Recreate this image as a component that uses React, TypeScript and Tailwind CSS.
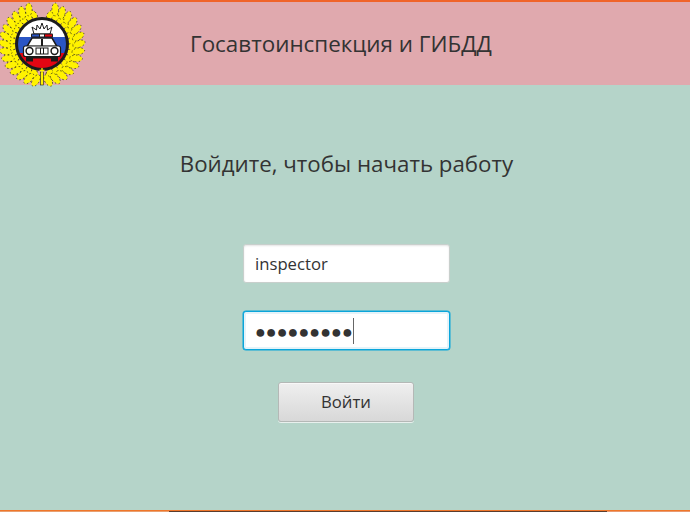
type Leaf = { x: number; y: number; r: number; rx: number; ry: number };

function buildLeaves(): Leaf[] {
  const out: Leaf[] = [];
  const rows = [
    { rad: 31, rx: 3.2, ry: 5.6, tilt: 30 },
    { rad: 37, rx: 3.4, ry: 6.4, tilt: -22 },
  ];
  rows.forEach((row, ri) => {
    for (let a = 17 + ri * 4; a <= 172; a += 11.5) {
      const t = (a * Math.PI) / 180;
      out.push({ x: -Math.sin(t) * row.rad, y: -Math.cos(t) * row.rad, r: a + row.tilt, rx: row.rx, ry: row.ry });
    }
  });
  return out;
}

const leaves = buildLeaves();

function Emblem() {
  return (
    <svg width="88" height="85" viewBox="0 0 88 85" className="absolute top-0 left-0">
      <g transform="translate(42 42)">
        {leaves.map((l, i) => (
          <g key={i}>
            <ellipse cx={l.x} cy={l.y} rx={l.rx} ry={l.ry} transform={`rotate(${-l.r} ${l.x} ${l.y})`} fill="#fff200" stroke="#1a1a1a" strokeWidth="0.7" strokeDasharray="1.4 2.4" />
            <ellipse cx={-l.x} cy={l.y} rx={l.rx} ry={l.ry} transform={`rotate(${l.r} ${-l.x} ${l.y})`} fill="#fff200" stroke="#1a1a1a" strokeWidth="0.7" strokeDasharray="1.4 2.4" />
          </g>
        ))}
      </g>
      <rect x="40.500" y="70" width="3" height="13" fill="#fff200" stroke="#1a1a1a" strokeWidth="0.6" />
      <circle cx="42" cy="42" r="27" fill="#1c1c1c" />
      <clipPath id="disc"><circle cx="42" cy="42" r="24" /></clipPath>
      <g clipPath="url(#disc)">
        <rect x="15" y="15" width="54" height="20" fill="#ffffff" />
        <rect x="15" y="35" width="54" height="16" fill="#2a55c4" />
        <rect x="15" y="51" width="54" height="17" fill="#e30613" />
      </g>
      <polygon points="42,21 44,27 47,23 47.500,28 52,25 50,32 34,32 32,25 36.500,28 37,23 40,27" fill="#fff" stroke="#1a1a1a" strokeWidth="1" />
      <rect x="31" y="31.500" width="22" height="4" rx="1" fill="#1a1a1a" />
      <rect x="32" y="32.500" width="7" height="2" fill="#2a55c4" />
      <rect x="40" y="32.500" width="4" height="2" fill="#fff" />
      <rect x="45" y="32.500" width="7" height="2" fill="#e30613" />
      <path d="M32 36H52L57 44.500H27Z" fill="#fff" stroke="#1a1a1a" strokeWidth="1.500" />
      <rect x="41" y="37" width="2" height="7" fill="#1a1a1a" />
      <rect x="23.500" y="44" width="37" height="10.500" rx="2" fill="#fff" stroke="#1a1a1a" strokeWidth="1.200" />
      <circle cx="29.500" cy="49" r="3.400" fill="#fff" stroke="#1a1a1a" strokeWidth="1.500" />
      <circle cx="54.500" cy="49" r="3.400" fill="#fff" stroke="#1a1a1a" strokeWidth="1.500" />
      <rect x="36" y="46" width="12" height="6" fill="#fff" stroke="#1a1a1a" strokeWidth="1" />
      <rect x="40" y="46" width="1" height="6" fill="#1a1a1a" />
      <rect x="43" y="46" width="1" height="6" fill="#1a1a1a" />
      <rect x="26" y="54.500" width="7" height="5" fill="#1a1a1a" />
      <rect x="51" y="54.500" width="7" height="5" fill="#1a1a1a" />
      <rect x="33" y="54.500" width="18" height="2" fill="#1a1a1a" />
      <path d="M42 66v5M39.500 68.500h5" stroke="#fff200" strokeWidth="1.300" />
    </svg>
  );
}

export default function App() {
  return (
    <div className="flex h-[512px] w-[690px] flex-col overflow-hidden bg-[#b5d4c9] font-['Open_Sans',sans-serif] text-[#333333]">
      <div className="h-[2px] bg-[#f0642a]" />
      <header className="relative flex h-[83px] items-center bg-[#e0a9ae] pl-[190px]">
        <Emblem />
        <h1 className="relative top-[1px] text-[22.4px] leading-none font-normal">Госавтоинспекция и ГИБДД</h1>
      </header>
      <main className="flex flex-1 flex-col items-center pl-[3px]">
        <h2 className="mt-[64px] text-[22.3px] leading-[30px] font-normal">Войдите, чтобы начать работу</h2>
        <div className="mt-[65px] flex h-[38.500px] w-[207px] items-center rounded-[3px] border border-[#c8cfcc] bg-white px-[11px] text-[16.7px] shadow-[inset_0_1px_2px_#e4e4e4]">inspector</div>
        <div className="mt-[28.500px] flex h-[39px] w-[207px] items-center rounded-[3px] border border-[#0aa5da] bg-white pl-[11px] shadow-[0_0_0_0.5px_#0aa5da,inset_0_0_0_2px_#e4f3f9]">
          <span className="text-[18px] leading-none">●●●●●●●●●</span>
          <span className="h-[26px] w-px bg-[#666666]" />
        </div>
        <button className="mt-[32px] mr-[1px] h-[40px] w-[136px] rounded-[3px] border border-[#b4b8b6] bg-gradient-to-b from-[#efefef] to-[#d8d8d8] text-[16.7px] shadow-[inset_0_1px_0_#f8f8f8,0_1px_0_#e8f0ed]">Войти</button>
      </main>
      <div className="h-px bg-[#f0762a]" />
      <div className="flex h-px">
        <div className="w-[169px] bg-[#e8a070]" />
        <div className="w-[438px] bg-[#5a3d2e]" />
        <div className="flex-1 bg-[#e89a70]" />
      </div>
    </div>
  );
}
